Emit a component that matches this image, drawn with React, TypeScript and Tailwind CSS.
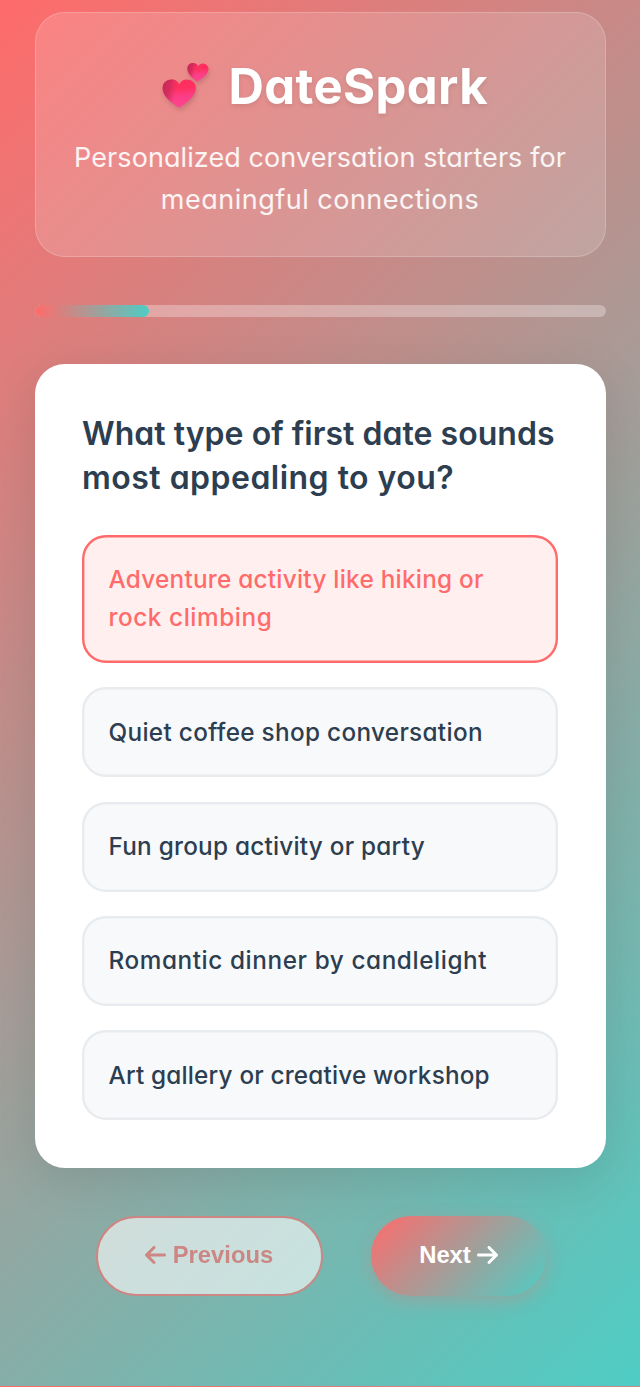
import React from "react";
import { FaArrowLeft, FaArrowRight } from "react-icons/fa6";

const HEART =
  "M50 92 C38 82 2 60 2 30 C2 12 15 3 28 3 C38 3 46 9 50 18 C54 9 62 3 72 3 C85 3 98 12 98 30 C98 60 62 82 50 92 Z";

function TwoHearts() {
  return (
    <svg
      viewBox="0 0 48 48"
      className="h-12 w-12 shrink-0 drop-shadow-[1px_3px_2px_rgba(0,0,0,0.14)]"
      aria-hidden="true"
    >
      <defs>
        <linearGradient id="heart" x1="0.45" y1="0" x2="0.55" y2="1">
          <stop offset="0.3" stopColor="#ff2f5f" />
          <stop offset="0.6" stopColor="#fb3e86" />
          <stop offset="1" stopColor="#ff4592" />
        </linearGradient>
        <linearGradient id="shade" x1="0" y1="0.3" x2="1" y2="0.5">
          <stop offset="0" stopColor="#c8285a" />
          <stop offset="0.2" stopColor="#cf2b5c" stopOpacity="0.85" />
          <stop offset="0.42" stopColor="#e03263" stopOpacity="0" />
        </linearGradient>
      </defs>
      <g transform="translate(0 15.6) scale(0.345 0.318)">
        <path d={HEART} fill="url(#heart)" />
        <path d={HEART} fill="url(#shade)" />
      </g>
      <g transform="translate(25.3 -1) rotate(3) scale(0.22 0.208)">
        <path d={HEART} fill="url(#heart)" />
        <path d={HEART} fill="url(#shade)" />
      </g>
    </svg>
  );
}

const OPTIONS = [
  { text: "Quiet coffee shop conversation", tracking: "tracking-[0.32px]" },
  { text: "Fun group activity or party", tracking: "tracking-[0.24px]" },
  { text: "Romantic dinner by candlelight", tracking: "tracking-[0.59px]" },
  { text: "Art gallery or creative workshop", tracking: "tracking-[0.19px]" },
];

export default function App() {
  return (
    <div className="flex h-[1387px] w-[640px] flex-col overflow-hidden bg-[linear-gradient(135deg,#ff6b6b_0%,#4ecdc4_100%)] bg-[length:100%_1386px] px-[34.5px] pt-3 font-['Inter','Open_Sans',sans-serif] [font-feature-settings:'cv11'_1,'ss03'_1]">
      <header className="flex h-[245px] shrink-0 flex-col items-center rounded-[30px] border border-white/20 bg-white/15 pt-[38px] text-white">
        <h1 className="flex h-[72px] items-center gap-[18.5px] whitespace-nowrap pl-[10px] text-[49px] font-bold leading-[72px]">
          <TwoHearts />
          <span className="tracking-[0.4px] [text-shadow:0_2.4px_5px_rgba(0,0,0,0.1)]">DateSpark</span>
        </h1>
        <p className="mt-[14px] flex flex-col items-center whitespace-nowrap text-[27px] leading-[41.5px] text-white/90">
          <span className="tracking-[0.08px]">Personalized conversation starters for</span>
          <span className="tracking-[0.5px]">meaningful connections</span>
        </p>
      </header>

      <div className="mt-[47.5px] h-3 shrink-0 overflow-hidden rounded-full bg-white/30">
        <div className="h-full w-1/5 rounded-full bg-[linear-gradient(90deg,#ff6b6b,#4ecdc4)]" />
      </div>

      <main className="mt-[47.5px] flex h-[803.5px] shrink-0 flex-col rounded-[30px] bg-white px-[47.5px] pt-[48px] text-[#2c3e50] shadow-[0_12px_48px_rgba(0,0,0,0.1)]">
        <h2 className="flex flex-col items-start whitespace-nowrap text-[32px] font-semibold leading-[44px]">
          <span className="tracking-[0.03px]">What type of first date sounds</span>
          <span className="tracking-[0.48px]">most appealing to you?</span>
        </h2>
        <div className="mt-[34.5px] flex flex-col gap-[24.3px] text-[24.3px] font-medium leading-[38px]">
          <button className="flex h-[128.5px] flex-col items-start justify-center whitespace-nowrap rounded-[24px] bg-[#fff0ef] px-[26.5px] pb-[2px] text-[#ff6b6b] shadow-[inset_0_0_0_2.4px_#ff6b6b]">
            <span className="tracking-[0.26px]">Adventure activity like hiking or</span>
            <span className="tracking-[0.57px]">rock climbing</span>
          </button>
          {OPTIONS.map((option) => (
            <button
              key={option.text}
              className="flex h-[90px] items-center whitespace-nowrap rounded-[24px] bg-[#f8f9fb] px-[26.5px] pb-px shadow-[inset_0_0_0_2.4px_#e9ecef]"
            >
              <span className={option.tracking}>{option.text}</span>
            </button>
          ))}
        </div>
      </main>

      <nav className="mt-12 flex justify-center gap-[48px] pl-[1.5px] font-['Liberation_Sans',Arial,sans-serif] text-[23.8px] font-bold">
        <button className="flex h-20 w-[227.5px] items-center justify-center gap-[6.5px] rounded-full border-2 border-[#ff6b6b] bg-white pb-[2px] text-[#ff6b6b] opacity-60">
          <FaArrowLeft className="h-6 w-[21px]" />
          <span>Previous</span>
        </button>
        <button className="flex h-20 w-[175px] items-center justify-center gap-[6px] rounded-full bg-[linear-gradient(135deg,#ff6b6b,#4ecdc4)] pb-[2px] text-white shadow-[0_5px_18px_rgba(255,107,107,0.3)]">
          <span>Next</span>
          <FaArrowRight className="h-6 w-[21px]" />
        </button>
      </nav>
    </div>
  );
}
